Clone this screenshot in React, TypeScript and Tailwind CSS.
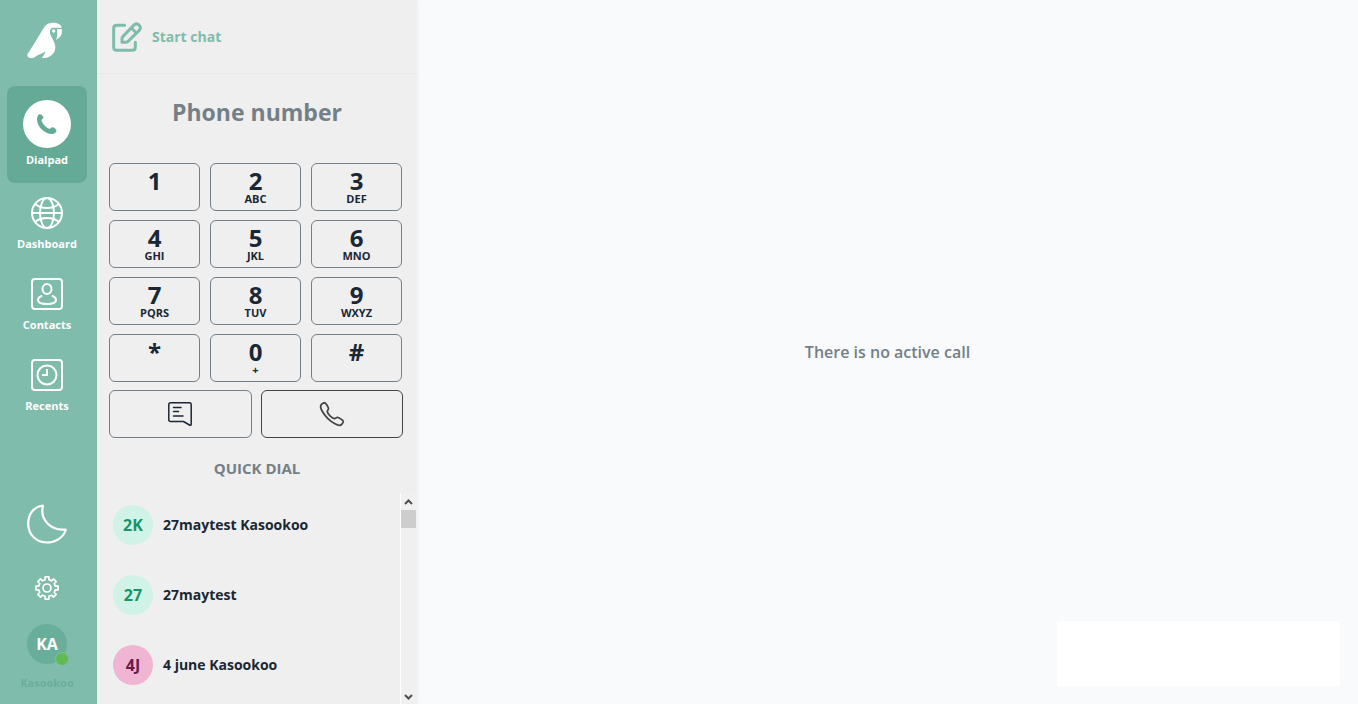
import React from "react";
import { IoCallOutline } from "react-icons/io5";
import clsx from "clsx";

interface IconProps {
    className?: string;
}

interface Contact {
    initials: string;
    name: string;
    tone: string;
}

const KEYS = [
    { digit: "1", letters: "" },
    { digit: "2", letters: "ABC" },
    { digit: "3", letters: "DEF" },
    { digit: "4", letters: "GHI" },
    { digit: "5", letters: "JKL" },
    { digit: "6", letters: "MNO" },
    { digit: "7", letters: "PQRS" },
    { digit: "8", letters: "TUV" },
    { digit: "9", letters: "WXYZ" },
    { digit: "*", letters: "" },
    { digit: "0", letters: "+" },
    { digit: "#", letters: "" },
];

const CONTACTS: Contact[] = [
    { initials: "2K", name: "27maytest Kasookoo", tone: "bg-[#d1f2e6] text-[#19946a]" },
    { initials: "27", name: "27maytest", tone: "bg-[#d1f2e6] text-[#19946a]" },
    { initials: "4J", name: "4 june Kasookoo", tone: "bg-[#efb5d2] text-[#6b1a4b]" },
];

function ParrotLogo({ className }: IconProps) {
    return (
        <svg viewBox="0 0 108 108" fill="currentColor" className={className} aria-hidden="true">
            <path d="M1 97C12 82 40 34 52 15C60 4 70 2 80 2C94 2 103 9 104 17H80C71 17 68 25 69 33C71 46 85 58 85 76C85 94 70 108 52 108H44C50 101 54 95 55 88C46 96 34 97 27 103C22 108 18 108 10 108C4 108 0 103 1 97Z" />
            <circle cx="80" cy="27" r="5" />
            <path d="M90 21H104C107 34 103 46 87 53C91 44 92 36 90 21Z" />
        </svg>
    );
}

function ComposeIcon({ className }: IconProps) {
    return (
        <svg viewBox="0 0 90 90" fill="none" stroke="currentColor" strokeWidth="9" strokeLinecap="round" strokeLinejoin="round" className={className} aria-hidden="true">
            <path d="M38 10H14Q5 10 5 19V76Q5 85 14 85H61Q70 85 70 76V61" />
            <path d="M30 61V50Q30 46 33 43L65 10Q73 2 81 9Q89 17 81 26L48 58Q45 61 41 61Z" />
            <path d="M58 18L73 33" />
        </svg>
    );
}

function HandsetIcon({ className }: IconProps) {
    return (
        <svg viewBox="0 0 62 62" fill="currentColor" className={className} aria-hidden="true">
            <path d="M6 1C11 -1 19 5 20 11C20 15 13 17 14 20C17 30 28 42 38 46C42 47 44 40 49 41C56 42 62 50 60 54C57 60 50 62 44 62C20 60 1 38 0 18C0 12 1 4 6 1Z" />
        </svg>
    );
}

function GlobeIcon({ className }: IconProps) {
    return (
        <svg viewBox="0 0 32 32" fill="none" stroke="currentColor" strokeWidth="2" className={className} aria-hidden="true">
            <circle cx="16" cy="16" r="15" />
            <ellipse cx="16" cy="16" rx="7" ry="15" />
            <path d="M1 16H31M4 7Q9 11 16 11T28 7M4 25Q9 21 16 21T28 25" />
        </svg>
    );
}

function ContactIcon({ className }: IconProps) {
    return (
        <svg viewBox="0 0 32 32" fill="none" stroke="currentColor" strokeWidth="2" strokeLinecap="round" className={className} aria-hidden="true">
            <rect x="1" y="1" width="30" height="30" rx="3" />
            <ellipse cx="16" cy="11" rx="4.500" ry="5" />
            <path d="M10.500 18C8 19 7 20.500 7 22C7 24.500 11 26 16 26S25 24.500 25 22C25 20.500 24 19 21.500 18" />
        </svg>
    );
}

function RecentIcon({ className }: IconProps) {
    return (
        <svg viewBox="0 0 32 32" fill="none" stroke="currentColor" strokeWidth="2" className={className} aria-hidden="true">
            <rect x="1" y="1" width="30" height="30" rx="3" />
            <circle cx="16" cy="16" r="9.500" />
            <path d="M16 10V16H11" />
        </svg>
    );
}

function MoonIcon({ className }: IconProps) {
    return (
        <svg viewBox="0 0 40 40" fill="none" stroke="currentColor" strokeWidth="2.200" strokeLinejoin="round" className={className} aria-hidden="true">
            <path d="M15.500 1.500C6 3 1.200 11 1.200 19.500C1.200 31 9.500 38.500 20 38.500C28 38.500 36 34 38.500 26.500C39 25.500 38.500 25.500 37.500 25.500C24 26.500 13 16 15.800 2.500C16 1.500 16 1.500 15.500 1.500Z" />
        </svg>
    );
}

// eight square teeth around the hub
const GEAR_POINTS = Array.from({ length: 8 }, (_, tooth) =>
    [[-13, 8.5], [-10, 11.2], [10, 11.2], [13, 8.5]].map(([offset, radius]) => {
        const angle = ((tooth * 45 + offset) * Math.PI) / 180;
        return `${12 + radius * Math.cos(angle)},${12 + radius * Math.sin(angle)}`;
    }).join(" ")
).join(" ");

function GearIcon({ className }: IconProps) {
    return (
        <svg viewBox="0 0 24 24" fill="none" stroke="currentColor" strokeWidth="1.700" strokeLinejoin="round" className={className} aria-hidden="true">
            <polygon points={GEAR_POINTS} />
            <circle cx="12" cy="12" r="4" />
        </svg>
    );
}

function MessageIcon({ className }: IconProps) {
    return (
        <svg viewBox="0 0 24 24" fill="none" stroke="currentColor" strokeWidth="1.500" strokeLinecap="round" strokeLinejoin="round" className={className} aria-hidden="true">
            <path d="M2.500 .8H21.500Q23.200 .8 23.200 2.500V22Q23.200 24 21.500 23L15.500 19.500H2.500Q.8 19.500 .8 17.700V2.500Q.8 .8 2.500 .8Z" />
            <path d="M5.500 5.500H13M5.500 9.500H10.500M5.500 14H15" />
        </svg>
    );
}

const NAV_ITEMS = [
    { label: "Dashboard", Icon: GlobeIcon },
    { label: "Contacts", Icon: ContactIcon },
    { label: "Recents", Icon: RecentIcon },
];

function Sidebar() {
    return (
        <aside className="flex w-[97px] shrink-0 flex-col items-center bg-[#80bcab] pr-[3px] text-white">
            <ParrotLogo className="mt-[22px] mr-1 h-9 w-9" />
            <nav className="mt-7 flex flex-col items-center text-[11px] leading-4 font-bold">
                <a href="#dialpad" className="flex h-[97px] w-20 flex-col items-center rounded-lg bg-[#65aa96] pt-3.5">
                    <span className="mb-1 flex h-12 w-12 items-center justify-center rounded-full bg-white text-[#65aa96]">
                        <HandsetIcon className="h-5 w-5" />
                    </span>
                    Dialpad
                </a>
                {NAV_ITEMS.map(({ label, Icon }) => (
                    <a key={label} href={`#${label.toLowerCase()}`} className="flex h-[81px] flex-col items-center gap-[7px] pt-3.5">
                        <Icon className="h-8 w-8" />
                        {label}
                    </a>
                ))}
            </nav>
            <div className="mt-auto flex flex-col items-center pb-[13px]">
                <button type="button" aria-label="Dark mode">
                    <MoonIcon className="h-10 w-10" />
                </button>
                <button type="button" aria-label="Settings" className="mt-8">
                    <GearIcon className="h-6 w-6" />
                </button>
                <div className="relative mt-6 flex h-10 w-10 items-center justify-center rounded-full bg-[#69ae9b] text-base font-bold">
                    KA
                    <span className="absolute -right-0.5 -bottom-0.5 h-3.5 w-3.5 rounded-full border border-[#80bcab] bg-[#60bc50]" />
                </div>
                <span className="mt-[11px] text-[11px] leading-4 font-bold text-[#69ae9b]">Kasookoo</span>
            </div>
        </aside>
    );
}

function Dialpad() {
    return (
        <div className="pr-[14px] pl-3">
            <div className="mr-px grid grid-cols-3 gap-x-2.5 gap-y-[9px]">
                {KEYS.map(({ digit, letters }) => (
                    <button
                        key={digit}
                        type="button"
                        className="flex h-12 flex-col items-center rounded-md border border-[#747f87] pt-[5px] font-bold"
                    >
                        <span className="text-2xl leading-6">{digit}</span>
                        <span className="text-[11px] leading-3">{letters}</span>
                    </button>
                ))}
            </div>
            <div className="mt-2 grid grid-cols-2 gap-[9px]">
                <button type="button" aria-label="Message" className="flex h-12 items-center justify-center rounded-md border border-[#747f87]">
                    <MessageIcon className="h-6 w-6" />
                </button>
                <button type="button" aria-label="Call" className="flex h-12 items-center justify-center rounded-md border border-[#444] text-[#444]">
                    <IoCallOutline className="h-7 w-7" />
                </button>
            </div>
        </div>
    );
}

function QuickDial() {
    return (
        <section className="flex min-h-0 flex-1 flex-col">
            <h2 className="pt-[19px] pb-[11px] text-center text-[15px] leading-[22px] font-bold text-[#747f87]">QUICK DIAL</h2>
            <div className="flex min-h-0 flex-1">
                <ul className="flex-1 overflow-hidden px-4">
                    {CONTACTS.map(({ initials, name, tone }) => (
                        <li key={name} className="flex h-[70px] items-center gap-2.5">
                            <span className={clsx("flex h-10 w-10 shrink-0 items-center justify-center rounded-full text-base font-bold", tone)}>
                                {initials}
                            </span>
                            <span className="text-sm font-bold">{name}</span>
                        </li>
                    ))}
                </ul>
                <div className="mt-[3px] mr-px flex w-4 flex-col items-center border-l border-white bg-[#f0f0f0] text-[#505050]">
                    <svg viewBox="0 0 9 6" className="mt-1.5 mb-[5px] h-1.5 w-[9px] shrink-0" fill="none" stroke="currentColor" strokeWidth="2" aria-hidden="true">
                        <path d="M1 5L4.500 1.500L8 5" />
                    </svg>
                    <div className="h-[18px] w-full shrink-0 bg-[#cdcdcd]" />
                    <svg viewBox="0 0 9 6" className="mt-auto mb-1 h-1.5 w-[9px] shrink-0" fill="none" stroke="currentColor" strokeWidth="2" aria-hidden="true">
                        <path d="M1 1L4.500 4.500L8 1" />
                    </svg>
                </div>
            </div>
        </section>
    );
}

export default function App() {
    return (
        <div className="flex h-screen overflow-hidden bg-[#f8fafc] font-['Open_Sans','Noto_Sans',sans-serif] text-[#1a2734]">
            <Sidebar />
            <div className="z-10 flex w-80 shrink-0 flex-col bg-[#efefef] shadow-[1px_0_4px_rgba(60,60,120,0.06)]">
                <header className="h-[74px] shrink-0 border-b border-[#e9e9e9] px-[15px] text-[#80bcab]">
                    <button type="button" className="flex h-full items-center gap-2.5 text-sm font-bold">
                        <ComposeIcon className="h-[30px] w-[30px]" />
                        Start chat
                    </button>
                </header>
                <input
                    type="tel"
                    aria-label="Phone number"
                    placeholder="Phone number"
                    className="mx-3 mt-[18px] mb-[31px] h-10 bg-transparent text-center text-[23px] font-bold outline-none placeholder:text-[#747f87]"
                />
                <Dialpad />
                <QuickDial />
            </div>
            <main className="relative flex flex-1 items-center justify-center">
                <p className="text-base font-semibold text-[#747f87]">There is no active call</p>
                <div className="absolute right-[18px] bottom-[18px] h-[65px] w-[283px] bg-white" />
            </main>
        </div>
    );
}
